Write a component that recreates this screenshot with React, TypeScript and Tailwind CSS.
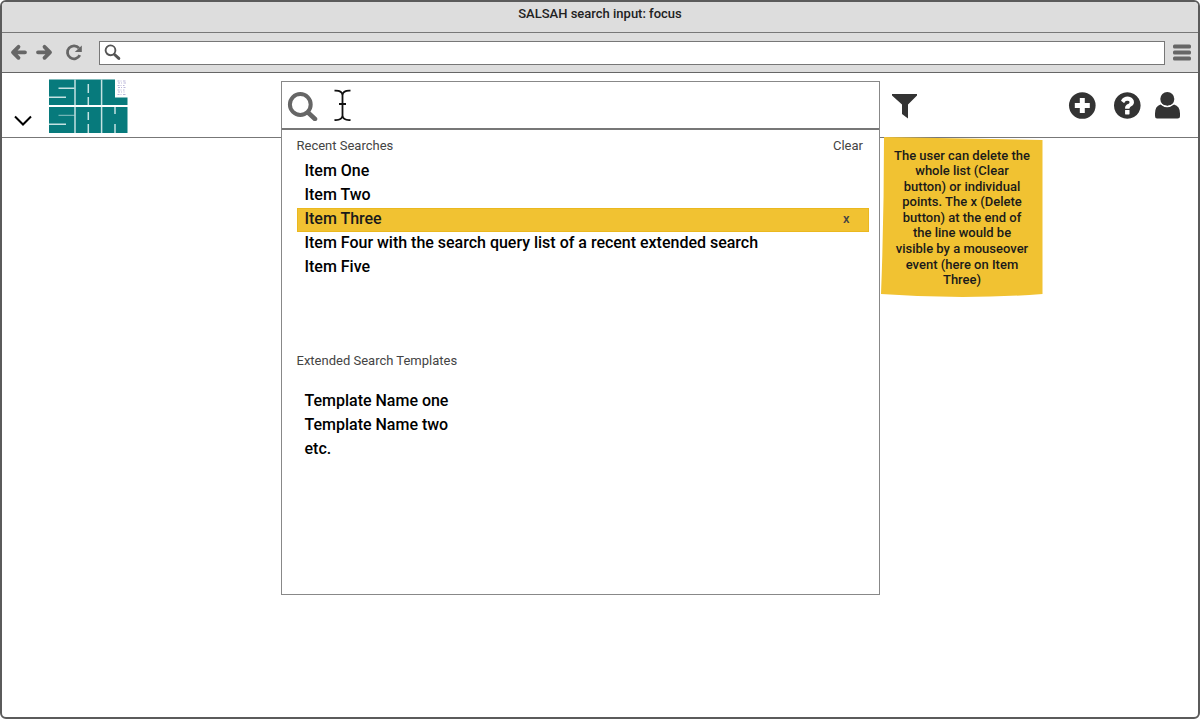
import type { ReactNode } from "react";

const FONT = "font-['Roboto',sans-serif]";

function Row({ children, active }: { children: ReactNode; active?: boolean }) {
  return (
    <li
      className={
        active
          ? "flex h-6 items-center justify-between border border-[#ebb81f] bg-[#f1c232] pl-[7px] pr-[18px] text-[#1a1a1a]"
          : "flex h-6 items-center pl-2"
      }
    >
      <span className="-mt-[3px] tracking-[-0.01px]">{children}</span>
      {active && <button className="-mt-[3px] text-[13px] leading-none text-[#444]">x</button>}
    </li>
  );
}

function Logo() {
  return (
    <svg className="ml-[15px] mt-[6px] h-[55px] w-[80px]" viewBox="48 79 80 55">
      <path fill="#077a7c" d="M49 79.5h66v18h12.5V105H49zM49 107h78.5v26H49z" />
      <g stroke="#c5e2e2" fill="none" strokeWidth="1.5">
        <path d="M58.5 88.3h16M49 97.3h17M49 124.300h17" />
        <path strokeWidth=".7" d="M58.500 115.300h16" />
        <path d="M75 79.500v53.500M101.600 79.500v53.500" />
        <path d="M88.300 84v9M88.300 97v8M88.300 112v8M88.300 124v9M115 107v7M115 124v9" />
      </g>
      <path stroke="#fff" strokeWidth="1.600" d="M48 106h80" />
      <g stroke="#aaa4d0" strokeWidth=".8" strokeDasharray="2 1 1 1.500 2.500 .8">
        <path d="M117.500 81h8M118 83h8.500M117.500 85.500h7M118 87.500h7.500M117.500 90h7M118 92h6.500M117.500 94.500h8" />
      </g>
    </svg>
  );
}

export default function App() {
  return (
    <div className={`flex h-[719px] w-[1200px] flex-col overflow-hidden rounded-[6px] border-2 border-[#5b5b5b] bg-white text-black ${FONT}`}>
      <div className="flex h-[31px] shrink-0 justify-center border-b border-[#777] bg-[#ddd] pt-[3px] text-[13px] font-medium leading-[17px] text-[#222]">
        SALSAH search input: focus
      </div>
      <div className="flex h-10 shrink-0 items-center border-b border-[#666] bg-[#ddd] pl-2">
        <svg className="-mt-[2px] h-[20px] w-[76px]" viewBox="10 42 76 20" fill="none" stroke="#666" strokeWidth="3.800" strokeLinecap="round" strokeLinejoin="round">
          <path d="M25 52.300H13.500M18.500 46.800l-5.500 5.500 5.500 5.500M38 52.300h11.500M44.500 46.800l5.500 5.500-5.500 5.500" />
          <path d="M79 48.200a6.500 6.500 0 1 0 .8 7" strokeWidth="2.800" strokeLinecap="butt" />
          <path d="M81.800 45.500v6.500h-7z" fill="#666" stroke="none" />
        </svg>
        <div className="ml-[13px] flex h-[24px] w-[1066px] items-center border border-[#777] bg-white pl-[3.500px]">
          <svg className="h-[17px] w-[17px]" viewBox="0 0 17 17" fill="none" stroke="#555">
            <circle cx="6.500" cy="6.300" r="4.900" strokeWidth="1.900" />
            <path d="M10.500 10.500l4.300 3.900" strokeWidth="3" strokeLinecap="round" />
          </svg>
        </div>
        <svg className="ml-2 h-[17px] w-[18px]" viewBox="0 0 18 17" fill="#666">
          <rect y="0.500" width="18" height="4" rx="1.500" />
          <rect y="6.500" width="18" height="4" rx="1.500" />
          <rect y="12.500" width="18" height="4" rx="1.500" />
        </svg>
      </div>

      <header className="flex h-[65px] shrink-0 items-start border-b border-[#777]">
        <svg className="ml-3 mt-[42px] h-[12px] w-[19px]" viewBox="14 115 19 12" fill="none" stroke="#000" strokeWidth="2">
          <path d="M15 116.500l8 8 8-8" />
        </svg>
        <Logo />
        <div className="relative ml-[153px] mt-2 w-[599px]">
          <section className="absolute inset-x-0 top-0 h-[514px] border border-[#888] bg-white">
            <div className="flex h-[48px] items-start border-b-2 border-[#777]">
              <svg className="ml-[5px] mt-[7px] h-[32px] w-[66px]" viewBox="287.500 89 66 32" fill="none">
                <circle cx="300.800" cy="104.500" r="10.400" stroke="#666" strokeWidth="4" />
                <path d="M308.500 112.500l7 6.500" stroke="#666" strokeWidth="4.500" strokeLinecap="round" />
                <path d="M335 90.700q7.500-.5 8 4.500q.5-5 8-4.500M335 120q7.500.5 8-4.500q.5 5 8 4.500M343 94v23M339.500 104h7" stroke="#111" strokeWidth="1.800" />
              </svg>
            </div>
            <div className="pl-[14.500px] pr-[15px]">
              <div className="flex h-[29px] items-center justify-between pr-px pt-[3px] text-[13px] leading-4 text-[#444]">
                <h2>Recent Searches</h2>
                <button>Clear</button>
              </div>
              <ul className="w-[572px] pt-px text-base font-medium">
                <Row>Item One</Row>
                <Row>Item Two</Row>
                <Row active>Item Three</Row>
                <Row>Item Four with the search query list of a recent extended search</Row>
                <Row>Item Five</Row>
              </ul>
              <h2 className="mt-[73px] text-[13px] leading-4 text-[#444]">Extended Search Templates</h2>
              <ul className="mt-[21px] text-base font-medium">
                <Row>Template Name one</Row>
                <Row>Template Name two</Row>
                <Row>etc.</Row>
              </ul>
            </div>
          </section>
        </div>
        <div className="relative w-[163px]">
          <svg className="ml-3 mt-[20px] h-[27px] w-[26px]" viewBox="892 93 26 27" fill="#333">
            <path d="M892 94h25v1.500l-9 9v14l-6-4.500v-9.500l-10-9z" />
          </svg>
          <aside className="absolute left-px top-[64px] h-[161px] w-[162px]">
            <svg className="absolute inset-0" width="162" height="161" viewBox="0 0 162 161">
              <path d="M3 0L161.500 3V157Q82 163 0 157Q3 80 3 0Z" fill="#f1c232" />
            </svg>
            <p className="relative pt-[10.500px] text-center text-[13px] font-medium leading-[15.600px] text-[#1a1a1a]">
              The user can delete the<br />whole list (Clear<br />button) or individual<br />points. The x (Delete<br />button) at the end of<br />the line would be<br />visible by a mouseover<br />event (here on Item<br />Three)
            </p>
          </aside>
        </div>
        <nav className="ml-[24px] mt-[19px]">
          <svg width="116" height="28" viewBox="1067 92 116 28" fill="#333">
            <circle cx="1082.300" cy="105.500" r="13.300" />
            <path d="M1082.300 98v15M1074.800 105.500h15" stroke="#fff" strokeWidth="5" />
            <path
              transform="translate(1111.750 89.950) scale(.01735)"
              d="M1024 1376v-192q0-14-9-23t-23-9h-192q-14 0-23 9t-9 23v192q0 14 9 23t23 9h192q14 0 23-9t9-23zm256-672q0-88-55.500-163t-138.500-116-170-41q-243 0-371 213-15 24 8 42l132 100q7 6 19 6 16 0 25-12 53-68 86-92 34-24 86-24 48 0 85.500 26t37.500 59q0 38-20 61t-68 45q-63 28-115.500 86.500t-52.500 125.500v36q0 14 9 23t23 9h192q14 0 23-9t9-23q0-19 21.500-49.500t54.500-49.500q32-18 49-28.500t46-35 44.500-48 28-60.500 12.500-81zm384 192q0 209-103 385.500t-279.500 279.500-385.500 103-385.500-103-279.500-279.500-103-385.500 103-385.500 279.500-279.500 385.500-103 385.500 103 279.500 279.500 103 385.500z"
            />
            <circle cx="1167.300" cy="99" r="7" />
            <path d="M1160.500 104.500q6.500 5.500 13.500 0q6 1.500 6 9v2.500q0 2.500-2.500 2.500h-20.500q-2 0-2-2.500v-2.500q0-7.500 5.500-9z" />
            <path d="M1159.500 102.800q7.800 7 15.600 0" fill="none" stroke="#fff" strokeWidth="1" />
          </svg>
        </nav>
      </header>
    </div>
  );
}
